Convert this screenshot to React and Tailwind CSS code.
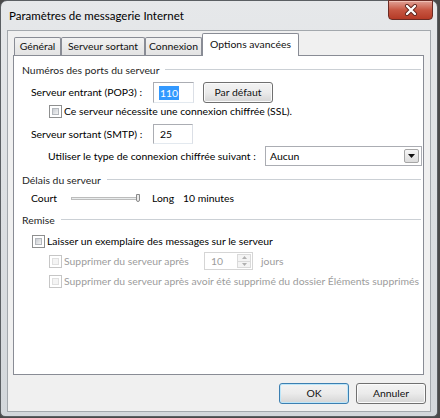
import React from 'react';

const Checkbox = ({ disabled }) => (
  <div
    className={`w-[13px] h-[13px] shrink-0 border p-[2px] bg-white ${
      disabled ? 'border-[#c6c6c6]' : 'border-[#8e8f8f]'
    }`}
  >
    <div
      className={`w-full h-full border ${
        disabled
          ? 'border-[#e0e0e0] bg-[#f4f4f4]'
          : 'border-[#b4b8bd] bg-gradient-to-br from-[#c9cdd2] to-[#f4f4f4]'
      }`}
    />
  </div>
);

const GroupHeader = ({ label }) => (
  <div className="flex items-center h-[16px] pl-[8px] pr-[2px] mt-[6px]">
    <span className="text-[#1e1e1e] whitespace-nowrap">{label}</span>
    <div className="flex-1 ml-[6px] h-[2px] border-t border-[#cbd0d5] border-b-white" />
  </div>
);

const WinButton = ({ children, primary, className = '' }) => (
  <div
    className={`h-[21px] w-[70px] flex items-center justify-center rounded-[3px] border bg-gradient-to-b from-[#f3f3f3] via-[#ebebeb] to-[#d5d5d5] text-[#111] ${
      primary ? 'border-[#3c7fb1] shadow-[inset_0_0_0_1px_#bde6f9]' : 'border-[#707070] shadow-[inset_0_0_0_1px_#fbfbfb]'
    } ${className}`}
  >
    {children}
  </div>
);

const tabs = [
  { label: 'Général', w: 'w-[47px]' },
  { label: 'Serveur sortant', w: 'w-[84px]' },
  { label: 'Connexion', w: 'w-[57px]' },
];

export default function App() {
  return (
    <div className="relative w-[440px] h-[418px] bg-[#4a4a4a] overflow-hidden font-[Lato,'Liberation_Sans',sans-serif] text-[10.4px] leading-none text-black">
      {/* window */}
      <div className="w-[438px] h-[417px] rounded-t-[7px] rounded-b-[5px] border border-[#5b5f63] bg-gradient-to-b from-[#e6e8ea] via-[#dcdfe2] to-[#d3d7db] flex flex-col">
        {/* title bar */}
        <div className="flex h-[29px] shrink-0">
          <div className="pl-[8px] pt-[9px] text-[11.5px] text-black">Paramètres de messagerie Internet</div>
          <div className="ml-auto mr-[4px] -mt-px w-[45px] h-[20px] rounded-b-[4px] border border-[#6b2b24] bg-gradient-to-b from-[#e0a196] via-[#c75642] to-[#b53a26] flex items-center justify-center shadow-[inset_0_1px_0_#f0c0b5]">
            <svg width="14" height="12" viewBox="0 0 14 12">
              <path d="M3 2 L11 10 M11 2 L3 10" stroke="#5a2019" strokeWidth="4" strokeLinecap="round" />
              <path d="M3 2 L11 10 M11 2 L3 10" stroke="#ffffff" strokeWidth="2.4" strokeLinecap="round" />
            </svg>
          </div>
        </div>

        {/* client area */}
        <div className="mx-[6px] h-[382px] border border-[#a3a8ad] bg-[#f0f0f0] flex flex-col">
          {/* tab strip */}
          <div className="flex items-end h-[24px] pl-[6px]">
            {tabs.map((t) => (
              <div
                key={t.label}
                className={`${t.w} h-[18px] flex items-center justify-center border border-b-0 border-[#898c95] bg-gradient-to-b from-[#f2f2f2] to-[#e3e3e3] text-[#111] rounded-t-[2px]`}
              >
                {t.label}
              </div>
            ))}
            <div className="relative z-10 w-[97px] h-[23px] -mb-px flex items-center justify-center border border-b-0 border-[#898c95] bg-white text-[#111] rounded-t-[2px] pb-[2px]">
              Options avancées
            </div>
          </div>

          {/* tab panel */}
          <div className="ml-[5px] w-[411px] h-[320px] border border-[#898c95] bg-white flex flex-col">
            <GroupHeader label="Numéros des ports du serveur" />

            <div className="flex items-center h-[21px] mt-[4px] pl-[17px]">
              <span className="w-[122px]">Serveur entrant (POP3) :</span>
              <div className="w-[41px] h-[21px] border border-[#abadb3] border-b-[#e3e9ef] border-r-[#dbdfe6] flex items-center pl-[5px]">
                <span className="bg-[#3399ff] text-white px-[1px] leading-[14px]">110</span>
              </div>
              <WinButton className="ml-[9px] w-[69px]">Par défaut</WinButton>
            </div>

            <div className="flex items-center h-[14px] mt-[1px] pl-[35px]">
              <Checkbox />
              <span className="ml-[2px]">Ce serveur nécessite une connexion chiffrée (SSL).</span>
            </div>

            <div className="flex items-center h-[20px] mt-[6px] pl-[17px]">
              <span className="w-[122px]">Serveur sortant (SMTP) :</span>
              <div className="w-[40px] h-[20px] border border-[#abadb3] border-b-[#e3e9ef] border-r-[#dbdfe6] flex items-center pl-[6px]">
                25
              </div>
            </div>

            <div className="flex items-center h-[20px] mt-[2px] pl-[34px]">
              <span className="w-[217px]">Utiliser le type de connexion chiffrée suivant :</span>
              <div className="w-[157px] h-[20px] border border-[#abadb3] flex items-center pl-[4px] pr-[2px]">
                <span className="flex-1">Aucun</span>
                <div className="w-[15px] h-[14px] border border-[#a6a6a6] rounded-[2px] bg-gradient-to-b from-[#f6f6f6] to-[#dcdcdc] flex items-center justify-center">
                  <svg width="7" height="4" viewBox="0 0 7 4">
                    <path d="M0 0 H7 L3.5 4 Z" fill="#111" />
                  </svg>
                </div>
              </div>
            </div>

            <GroupHeader label="Délais du serveur" />

            <div className="flex items-center h-[16px] mt-[2px] pl-[17px]">
              <span className="w-[40px]">Court</span>
              <div className="relative w-[69px] h-[10px] flex items-center">
                <div className="w-full h-[3px] border border-[#bcbcbc] bg-[#e9ecec]" />
                <div className="absolute right-0 top-[1px] w-[4px] h-[8px] border border-[#8a8a8a] bg-[#ececec] rounded-b-[2px]" />
              </div>
              <span className="ml-[12px] w-[31px]">Long</span>
              <span>10 minutes</span>
            </div>

            <GroupHeader label="Remise" />

            <div className="flex items-center h-[14px] mt-[6px] pl-[18px]">
              <Checkbox />
              <span className="ml-[2px]">Laisser un exemplaire des messages sur le serveur</span>
            </div>

            <div className="flex items-center h-[18px] mt-[4px] pl-[35px] text-[#9c9c9c]">
              <Checkbox disabled />
              <span className="ml-[2px] w-[140px]">Supprimer du serveur après</span>
              <div className="w-[49px] h-[18px] border border-[#d5d5d5] flex items-center pl-[6px] pr-[1px]">
                <span className="flex-1">10</span>
                <div className="w-[14px] h-[14px] flex flex-col border border-[#dadada]">
                  <div className="flex-1 flex items-center justify-center border-b border-[#dadada] bg-[#f4f4f4]">
                    <svg width="5" height="3" viewBox="0 0 5 3"><path d="M0 3 L2.5 0 L5 3 Z" fill="#b0b0b0" /></svg>
                  </div>
                  <div className="flex-1 flex items-center justify-center bg-[#f4f4f4]">
                    <svg width="5" height="3" viewBox="0 0 5 3"><path d="M0 0 H5 L2.5 3 Z" fill="#b0b0b0" /></svg>
                  </div>
                </div>
              </div>
              <span className="ml-[8px]">jours</span>
            </div>

            <div className="flex items-center h-[14px] mt-[4px] pl-[35px] text-[#9c9c9c]">
              <Checkbox disabled />
              <span className="ml-[2px] whitespace-nowrap">
                Supprimer du serveur après avoir été supprimé du dossier Éléments supprimés
              </span>
            </div>
          </div>

          {/* buttons */}
          <div className="flex justify-end gap-[7px] mt-[8px] pr-[4px]">
            <WinButton primary>OK</WinButton>
            <WinButton>Annuler</WinButton>
          </div>
        </div>
      </div>

      {/* busy cursor */}
      <div className="absolute left-[236px] top-[36px] w-[15px] h-[15px] rounded-full border-[3px] border-[#3fb7c8] shadow-[0_0_1px_#1c6f7d]" />
    </div>
  );
}
